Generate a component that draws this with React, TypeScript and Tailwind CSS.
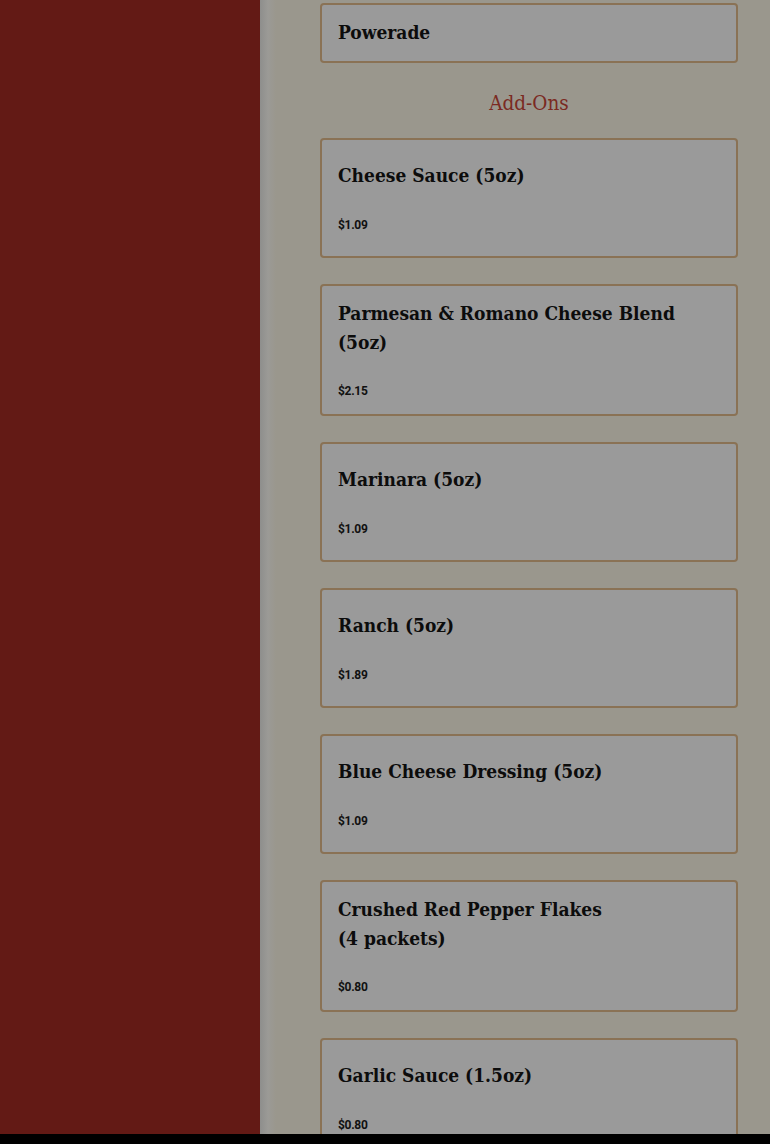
import React from "react";

type Item = {
  name: string;
  price?: string;
};

const addOns: Item[] = [
  { name: "Cheese Sauce (5oz)", price: "$1.09" },
  { name: "Parmesan & Romano Cheese Blend (5oz)", price: "$2.15" },
  { name: "Marinara (5oz)", price: "$1.09" },
  { name: "Ranch (5oz)", price: "$1.89" },
  { name: "Blue Cheese Dressing (5oz)", price: "$1.09" },
  { name: "Crushed Red Pepper Flakes (4\u00a0packets)", price: "$0.80" },
  { name: "Garlic Sauce (1.5oz)", price: "$0.80" },
];

const slab = "font-['DejaVu_Serif_Condensed','DejaVu_Serif',serif]";

function MenuCard({ item }: { item: Item }) {
  return (
    <div
      className={`flex flex-col justify-center rounded-[4px] border-2 border-[#8a7255] bg-[#9a9a9a] px-4 pt-[12.5px] pb-[14px] ${
        item.price ? "min-h-[120px]" : ""
      }`}
    >
      <h3
        className={`${slab} max-w-[360px] text-[19px] font-bold leading-[29px] text-[#0c0c0c] [font-stretch:condensed]`}
      >
        {item.name}
      </h3>
      {item.price && (
        <p className="mt-[25.5px] font-['Roboto','Liberation_Sans',sans-serif] text-[12px] font-bold leading-[18px] tracking-[-0.3px] text-[#111]">
          {item.price}
        </p>
      )}
    </div>
  );
}

export default function App() {
  return (
    <div className="flex h-[1144px] flex-col overflow-hidden bg-black">
      <div className="flex min-h-0 flex-1 bg-[#9a978d]">
        {/* drawer */}
        <aside className="w-[260px] shrink-0 bg-[#631a15]" />
        <div className="w-[16px] shrink-0 bg-gradient-to-r from-[#8e8e8c] via-[#9b9a96] to-[#9a978d]" />
        <main className="flex-1 pl-[44px] pr-[32px] pt-[3px]">
          <div className="flex flex-col">
            <MenuCard item={{ name: "Powerade" }} />
            <h2
              className={`${slab} mt-[26.5px] mb-[21px] text-center text-[20.5px] leading-[28px] text-[#7b2a22] [font-stretch:condensed]`}
            >
              Add-Ons
            </h2>
            <div className="flex flex-col gap-[26px]">
              {addOns.map((item) => (
                <MenuCard key={item.name} item={item} />
              ))}
            </div>
          </div>
        </main>
      </div>
      <div className="h-[10px] shrink-0 bg-black" />
    </div>
  );
}
